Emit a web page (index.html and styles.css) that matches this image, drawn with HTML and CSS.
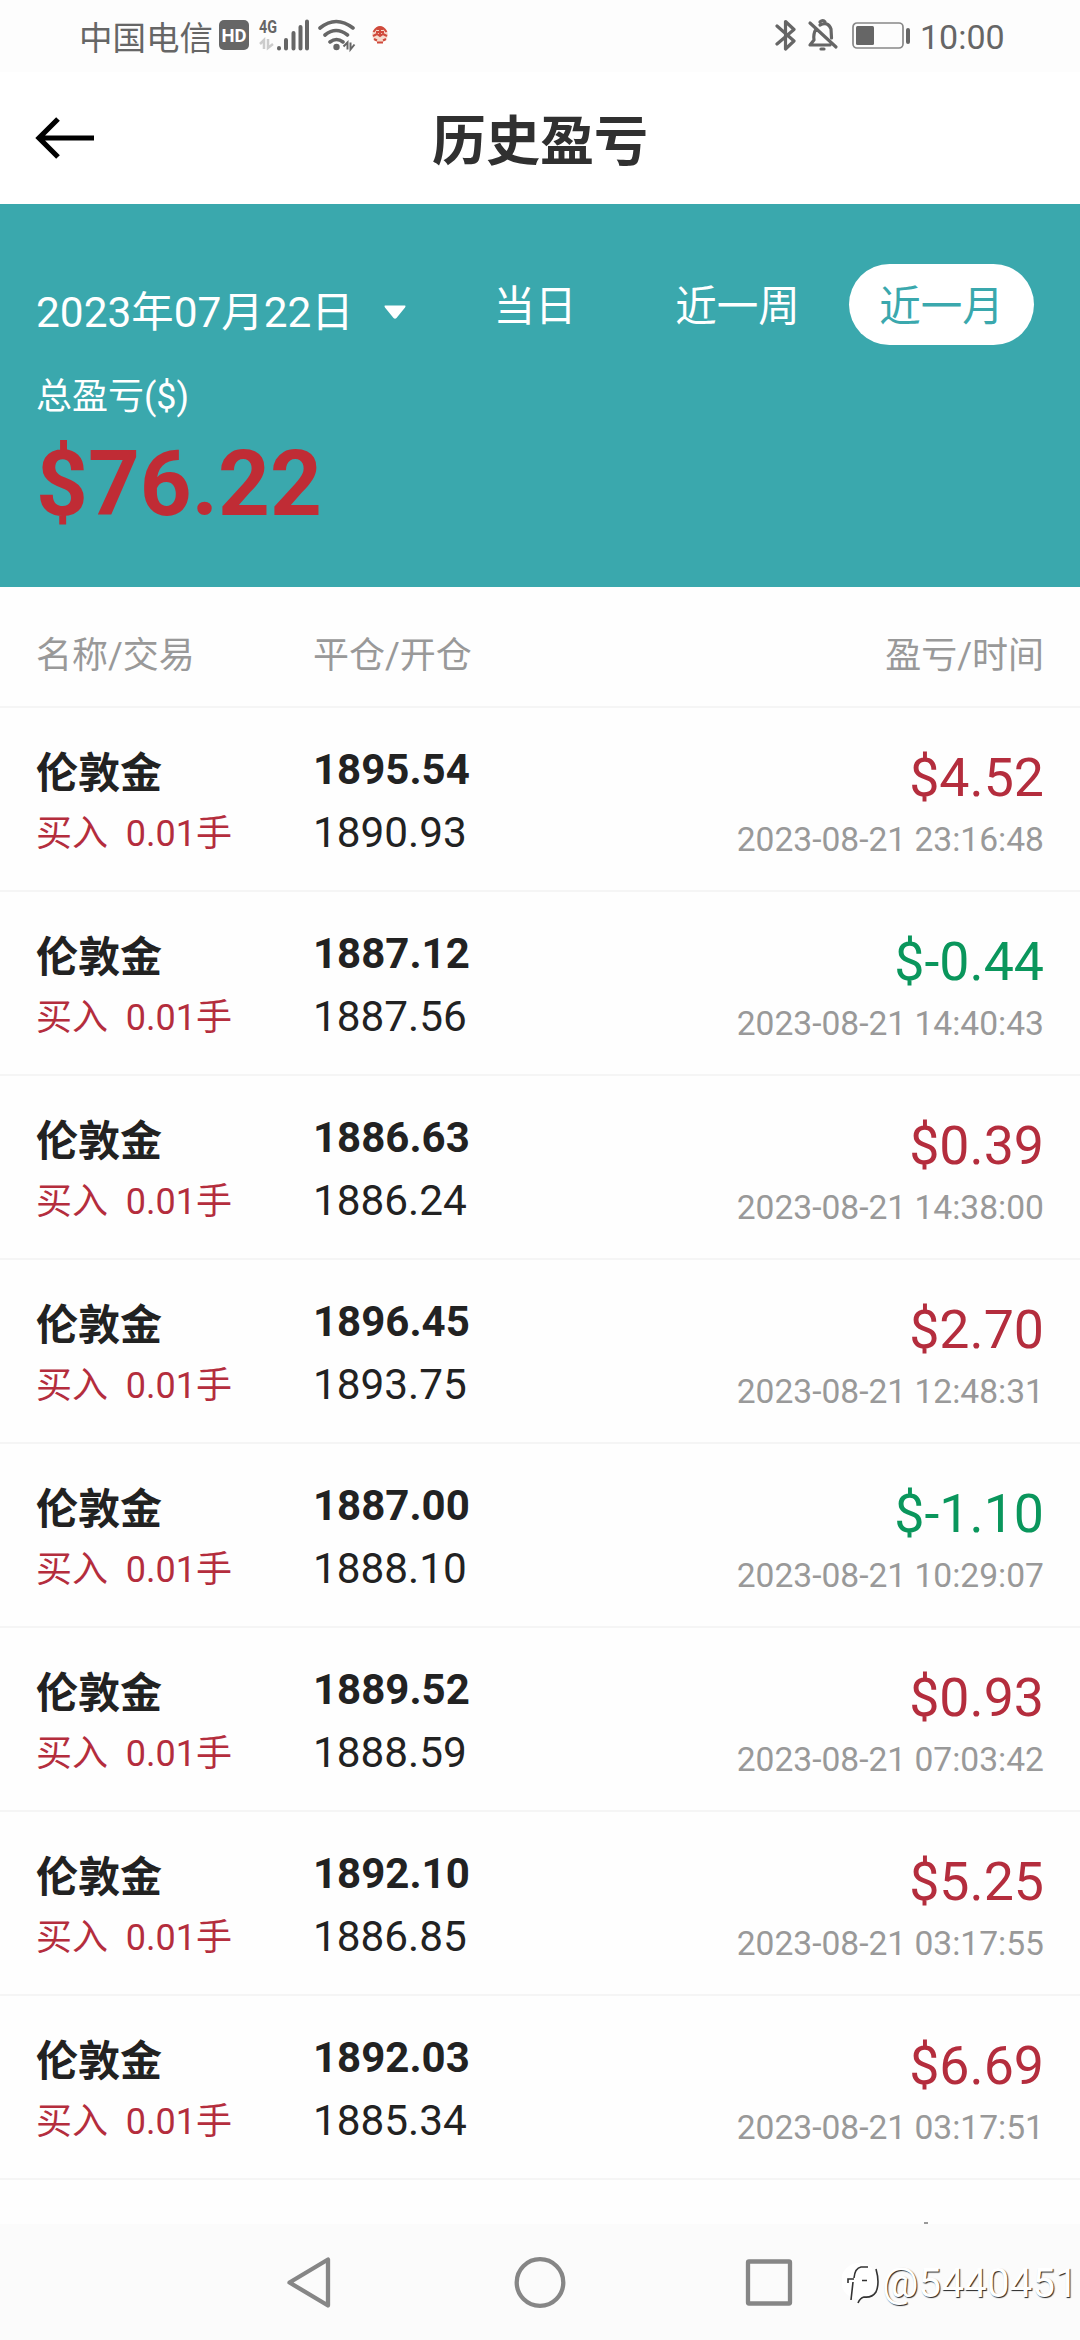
FILE: index.html
```html
<!DOCTYPE html>
<html lang="zh-CN">
<head>
<meta charset="utf-8">
<title>历史盈亏</title>
<link rel="stylesheet" href="styles.css">
</head>
<body>
<div class="screen">
  <div class="status">
    <span class="carrier">中国电信</span>
    <svg class="status-left" width="180" height="40" viewBox="0 0 180 40">
      <rect x="0" y="3" width="30" height="30" rx="5" fill="#666"/>
      <text x="15" y="24.500" text-anchor="middle" class="hd" textLength="25" lengthAdjust="spacingAndGlyphs">HD</text>
      <text x="40" y="16" class="net" textLength="18" lengthAdjust="spacingAndGlyphs">4G</text>
      <path d="M45 32V23l-4 4M49 22v9l5-4" fill="none" stroke="#ccc" stroke-width="2.500"/>
      <path d="M60 31v.5M67 23v8.500M74.500 16v15.500M81.500 10v21.500M88 4.500v27" fill="none" stroke="#666" stroke-width="4" stroke-linecap="round"/>
      <g fill="none" stroke="#666" stroke-width="3.600" stroke-linecap="round">
        <path d="M101 11q16-13 33 0M106 18q11-9 22.500 0M111 25q6.500-5 13 0"/>
      </g>
      <circle cx="117.500" cy="30" r="3.200" fill="#666"/>
      <path d="M128.500 32.500v-7l-4 4M131.500 25.500v7l4-5" fill="none" stroke="#666" stroke-width="2"/>
      <circle cx="161" cy="17.500" r="8" fill="#f6dccf"/>
      <g fill="none" stroke="#d04a3c" stroke-width="2"><path d="M154.500 15q6.500-10 13 0M158 12h6M157 15h8M161 10v8M154 19l4-2 3 2 3-2 4 2M155 22l3 1.500M167 22l-3 1.500M158 25.500h6"/></g>
    </svg>
    <svg class="status-right" width="140" height="40" viewBox="0 0 140 40">
      <g fill="none" stroke="#666" stroke-width="3.200" stroke-linejoin="round" stroke-linecap="round">
        <path d="M2 9l17 15-8.500 8V4.500l8.500 8L2 27"/>
        <path d="M35 6l26 24M41 12q-3 5-2 11l-4 5h20M45 8q8-4 11 4l.5 9"/>
        <path d="M45 5q3-3 5 0M46 32h3"/>
      </g>
      <rect x="78" y="6" width="50" height="25" rx="4" fill="none" stroke="#888" stroke-width="1.700"/>
      <rect x="81" y="9" width="18" height="19" rx="1.500" fill="#666"/>
      <rect x="131" y="11" width="4" height="16" rx="2" fill="#666"/>
    </svg>
    <span class="clock">10:00</span>
  </div>

  <header class="header">
    <svg class="back" width="60" height="42" viewBox="0 0 60 42"><path d="M59 21H4M23 2L4 21l19 19" fill="none" stroke="#000" stroke-width="5.200"/></svg>
    <h1 class="title">历史盈亏</h1>
  </header>

  <section class="summary">
    <div class="filters">
      <div class="date">2023年07月22日<svg class="caret" width="22" height="14" viewBox="0 0 22 14"><path d="M1 .5h20q1 .5 0 2L12.500 13q-1.500 1.500-3 0L1 2.500Q0 1 1 .5z" fill="#fff"/></svg></div>
      <span class="tab day">当日</span>
      <span class="tab week">近一周</span>
      <span class="tab active">近一月</span>
    </div>
    <div class="total-label">总盈亏($)</div>
    <div class="total">$76.22</div>
  </section>

  <main class="list">
    <div class="list-head"><span>名称/交易</span><span>平仓/开仓</span><span class="end">盈亏/时间</span></div>
    <div class="row"><div class="sym"><b>伦敦金</b><span>买入&nbsp; 0.01手</span></div><div class="price"><b>1895.54</b><span>1890.93</span></div><div class="result"><em class="up">$4.52</em><time>2023-08-21 23:16:48</time></div></div>
    <div class="row"><div class="sym"><b>伦敦金</b><span>买入&nbsp; 0.01手</span></div><div class="price"><b>1887.12</b><span>1887.56</span></div><div class="result"><em class="down">$-0.44</em><time>2023-08-21 14:40:43</time></div></div>
    <div class="row"><div class="sym"><b>伦敦金</b><span>买入&nbsp; 0.01手</span></div><div class="price"><b>1886.63</b><span>1886.24</span></div><div class="result"><em class="up">$0.39</em><time>2023-08-21 14:38:00</time></div></div>
    <div class="row"><div class="sym"><b>伦敦金</b><span>买入&nbsp; 0.01手</span></div><div class="price"><b>1896.45</b><span>1893.75</span></div><div class="result"><em class="up">$2.70</em><time>2023-08-21 12:48:31</time></div></div>
    <div class="row"><div class="sym"><b>伦敦金</b><span>买入&nbsp; 0.01手</span></div><div class="price"><b>1887.00</b><span>1888.10</span></div><div class="result"><em class="down">$-1.10</em><time>2023-08-21 10:29:07</time></div></div>
    <div class="row"><div class="sym"><b>伦敦金</b><span>买入&nbsp; 0.01手</span></div><div class="price"><b>1889.52</b><span>1888.59</span></div><div class="result"><em class="up">$0.93</em><time>2023-08-21 07:03:42</time></div></div>
    <div class="row"><div class="sym"><b>伦敦金</b><span>买入&nbsp; 0.01手</span></div><div class="price"><b>1892.10</b><span>1886.85</span></div><div class="result"><em class="up">$5.25</em><time>2023-08-21 03:17:55</time></div></div>
    <div class="row"><div class="sym"><b>伦敦金</b><span>买入&nbsp; 0.01手</span></div><div class="price"><b>1892.03</b><span>1885.34</span></div><div class="result"><em class="up">$6.69</em><time>2023-08-21 03:17:51</time></div></div>
    <div class="peek"></div>
  </main>

  <nav class="navbar">
    <svg class="nav-icons" width="520" height="60" viewBox="0 0 520 60"><g fill="none" stroke="#868686" stroke-width="4.300" stroke-linejoin="round"><path d="M42 7.500v46L3.500 30.500z"/><circle cx="254" cy="30.500" r="23.300"/><rect x="462" y="9.500" width="42" height="42" rx="1"/></g></svg>
  </nav>
  <div class="watermark">
    <svg width="40" height="48" viewBox="0 0 40 48"><circle cx="17" cy="22" r="18" fill="#fff"/><path d="M9 41l2-18M6 24v-4h6M12 19q1-10 7-11h7M20 21.500h5M34 10q4 14 0 23-4 6-12 5-4 1-6 6" fill="none" stroke="#333" stroke-width="1.600"/></svg>
    <span>@5440451</span>
  </div>
</div>
</body>
</html>
```
FILE: styles.css
```css
* { box-sizing: border-box; }
body { margin: 0; background: #fff; font-family: Roboto, "Noto Sans CJK SC", sans-serif; }
.screen { position: relative; width: 1080px; height: 2340px; overflow: hidden; display: flex; flex-direction: column; background: #fefefe; color: #222; }
.status { height: 72px; padding: 0 76px 0 79px; display: flex; align-items: center; background: #fdfdfd; color: #666; flex: none; }
.carrier { font-size: 33.500px; line-height: 40px; font-weight: 400; font-family: "Noto Sans CJK SC", sans-serif; width: 140px; white-space: nowrap; }
.status-left { margin-top: 2px; }
.status-right { margin-left: auto; margin-top: 2px; }
.hd { font: bold 19px Roboto, sans-serif; fill: #fff; }
.net { font: bold 18px Roboto, sans-serif; fill: #666; }
.clock { font-size: 34px; line-height: 40px; width: 84px; margin-left: 5px; margin-top: 2px; }
.header { height: 132px; flex: none; display: grid; grid-template-columns: 200px 1fr 200px; align-items: center; background: #fff; }
.back { margin-left: 35px; }
.title { margin: 9px 0 0; text-align: center; font-size: 54px; line-height: 80px; font-weight: 700; color: #303030; }
.summary { height: 383px; flex: none; padding: 60px 46px 0 36px; background: #3aa8ad; color: #fff; }
.filters { height: 82px; display: flex; font-size: 41.500px; line-height: 85px; }
.date { width: 458px; padding-top: 6px; font-size: 42.400px; }
.caret { margin-left: 30px; vertical-align: 8px; }
.tab { white-space: nowrap; }
.day { width: 182px; }
.week { width: 174px; }
.active { width: 185px; height: 81px; border-radius: 41px; text-align: center; background: #fff; color: #3aa8ad; }
.total-label { margin-top: 24px; font-size: 36px; line-height: 54px; }
.total { margin-top: 10px; font-size: 90.500px; line-height: 100px; font-weight: 700; color: #c02c35; }
.list { flex: 1; min-height: 0; overflow: hidden; }
.list-head, .row { padding: 0 36px; display: grid; grid-template-columns: 277px 300px 1fr; border-bottom: 2px solid #f5f5f5; }
.list-head { height: 121px; padding-top: 16px; line-height: 106px; font-size: 36px; color: #999; }
.end { text-align: right; }
.row { height: 184px; }
.row b, .row span, .row em, .row time { display: block; font-style: normal; white-space: nowrap; }
.sym b { font-size: 42px; line-height: 60px; margin-top: 36px; }
.sym span { font-size: 36px; line-height: 50px; margin-top: 5px; color: #b42d3d; }
.price { font-size: 42.300px; }
.price b { font-size: 42px; line-height: 60px; margin-top: 32px; }
.price span { line-height: 60px; margin-top: 3px; }
.result { text-align: right; }
.result em { font-size: 53.700px; line-height: 70px; margin-top: 35px; }
.result time { font-size: 33.600px; line-height: 44px; margin-top: 5px; color: #999; }
.result .up { color: #b42d3d; }
.result .down { color: #0a965c; }
.peek { width: 4px; height: 2px; margin: 42px 0 0 924px; background: #999; }
.navbar { height: 116px; flex: none; padding: 28px 0 0 286px; background: #fbfbfb; }
.watermark { position: absolute; left: 842px; top: 2259px; display: flex; align-items: center; font-size: 40.500px; line-height: 44px; color: #fff; text-shadow: 1px 1px 1px #222; }
```
